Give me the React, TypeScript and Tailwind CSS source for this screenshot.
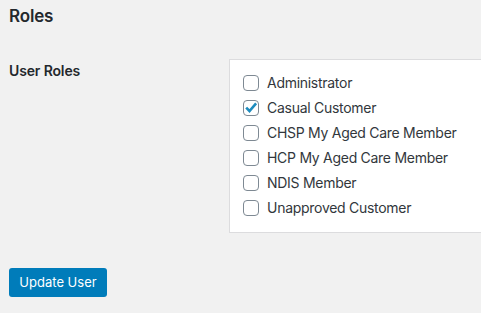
const roles = [
  { name: 'Administrator', checked: false },
  { name: 'Casual Customer', checked: true },
  { name: 'CHSP My Aged Care Member', checked: false },
  { name: 'HCP My Aged Care Member', checked: false },
  { name: 'NDIS Member', checked: false },
  { name: 'Unapproved Customer', checked: false },
];

const Checkbox = ({ checked }: { checked: boolean }) => (
  <span className="relative w-4 h-4 shrink-0 rounded-[4px] border border-[#7e8993] bg-white">
    {checked && (
      <svg viewBox="0 0 16 16" className="absolute -left-px -top-px w-4 h-4">
        <path d="M3.2 7.6l3.3 3.4 6.6-7.6" fill="none" stroke="#1e8cbe" strokeWidth="2.6" />
      </svg>
    )}
  </span>
);

const App = () => {
  return (
    <div
      className="w-[481px] h-[313px] overflow-hidden bg-[#f1f1f1] pl-[9px]"
      style={{ fontFamily: 'Inter, "Noto Sans", sans-serif' }}
    >
      <h2 className="mt-[5px] text-[17px] leading-[22px] font-semibold tracking-[-0.01em] text-[#23282d]">Roles</h2>

      <div className="mt-[32px] flex">
        <div className="w-[220px] shrink-0 pt-[2px] text-[14px] leading-5 font-semibold tracking-[-0.01em] text-[#23282d]">
          User Roles
        </div>
        <div className="w-[300px] shrink-0 bg-white border border-[#dcdcde] pl-[13px] pt-[10px] pb-[12px]">
          {roles.map((role) => (
            <label key={role.name} className="h-[25px] flex items-center gap-2 text-[14px] tracking-[-0.02em] text-[#32373c]">
              <Checkbox checked={role.checked} />
              <span>{role.name}</span>
            </label>
          ))}
        </div>
      </div>

      <button className="mt-[35px] w-[98px] h-[29px] rounded-[3px] bg-[#007cba] text-white text-[13px] flex items-center justify-center">
        Update User
      </button>
    </div>
  );
};

export default App;
